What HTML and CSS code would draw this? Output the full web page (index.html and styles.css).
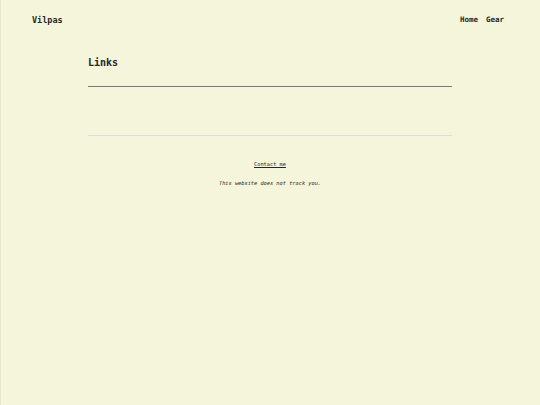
FILE: index.html
```html
<!DOCTYPE html>
<html lang="en">
<head>
<meta charset="utf-8">
<title>Links - Vilpas</title>
<link rel="stylesheet" href="styles.css">
</head>
<body>
<header class="site-header">
  <a class="brand" href="#">Vilpas</a>
  <nav class="nav">
    <a href="#">Home</a>
    <a href="#">Gear</a>
  </nav>
</header>
<main class="content">
  <h1 class="page-title">Links</h1>
  <div class="page-body"></div>
</main>
<footer class="site-footer">
  <p class="contact"><a href="#">Contact me</a></p>
  <p class="notice">This website does not track you.</p>
</footer>
</body>
</html>
```
FILE: styles.css
```css
html, body {
  margin: 0;
  padding: 0;
}
body {
  background: #f5f5dc;
  color: #262626;
  font-family: "DejaVu Sans Mono", "Liberation Mono", monospace;
  box-shadow: inset 1px 0 0 #e6e6c8;
  min-height: 405px;
}
a {
  color: inherit;
  text-decoration: none;
}
.site-header {
  display: flex;
  justify-content: space-between;
  align-items: center;
  padding: 14px 36px 0 32px;
  height: 12px;
  line-height: 12px;
  font-weight: bold;
}
.brand {
  font-size: 8.5px;
}
.nav {
  display: flex;
  gap: 8px;
  font-size: 7.5px;
}
.content {
  width: 364px;
  margin: 0 auto;
}
.page-title {
  margin: 30px 0 0;
  font-size: 10px;
  line-height: 14px;
  padding-bottom: 16px;
  border-bottom: 1px solid #777;
}
.page-body {
  height: 48px;
}
.site-footer {
  width: 364px;
  margin: 0 auto;
  border-top: 1px solid #ddd;
  text-align: center;
  font-size: 5.3px;
  line-height: 8px;
  padding-top: 24px;
}
.site-footer p {
  margin: 0 0 11px;
}
.contact a {
  text-decoration: underline;
}
.notice {
  font-style: italic;
}
```
